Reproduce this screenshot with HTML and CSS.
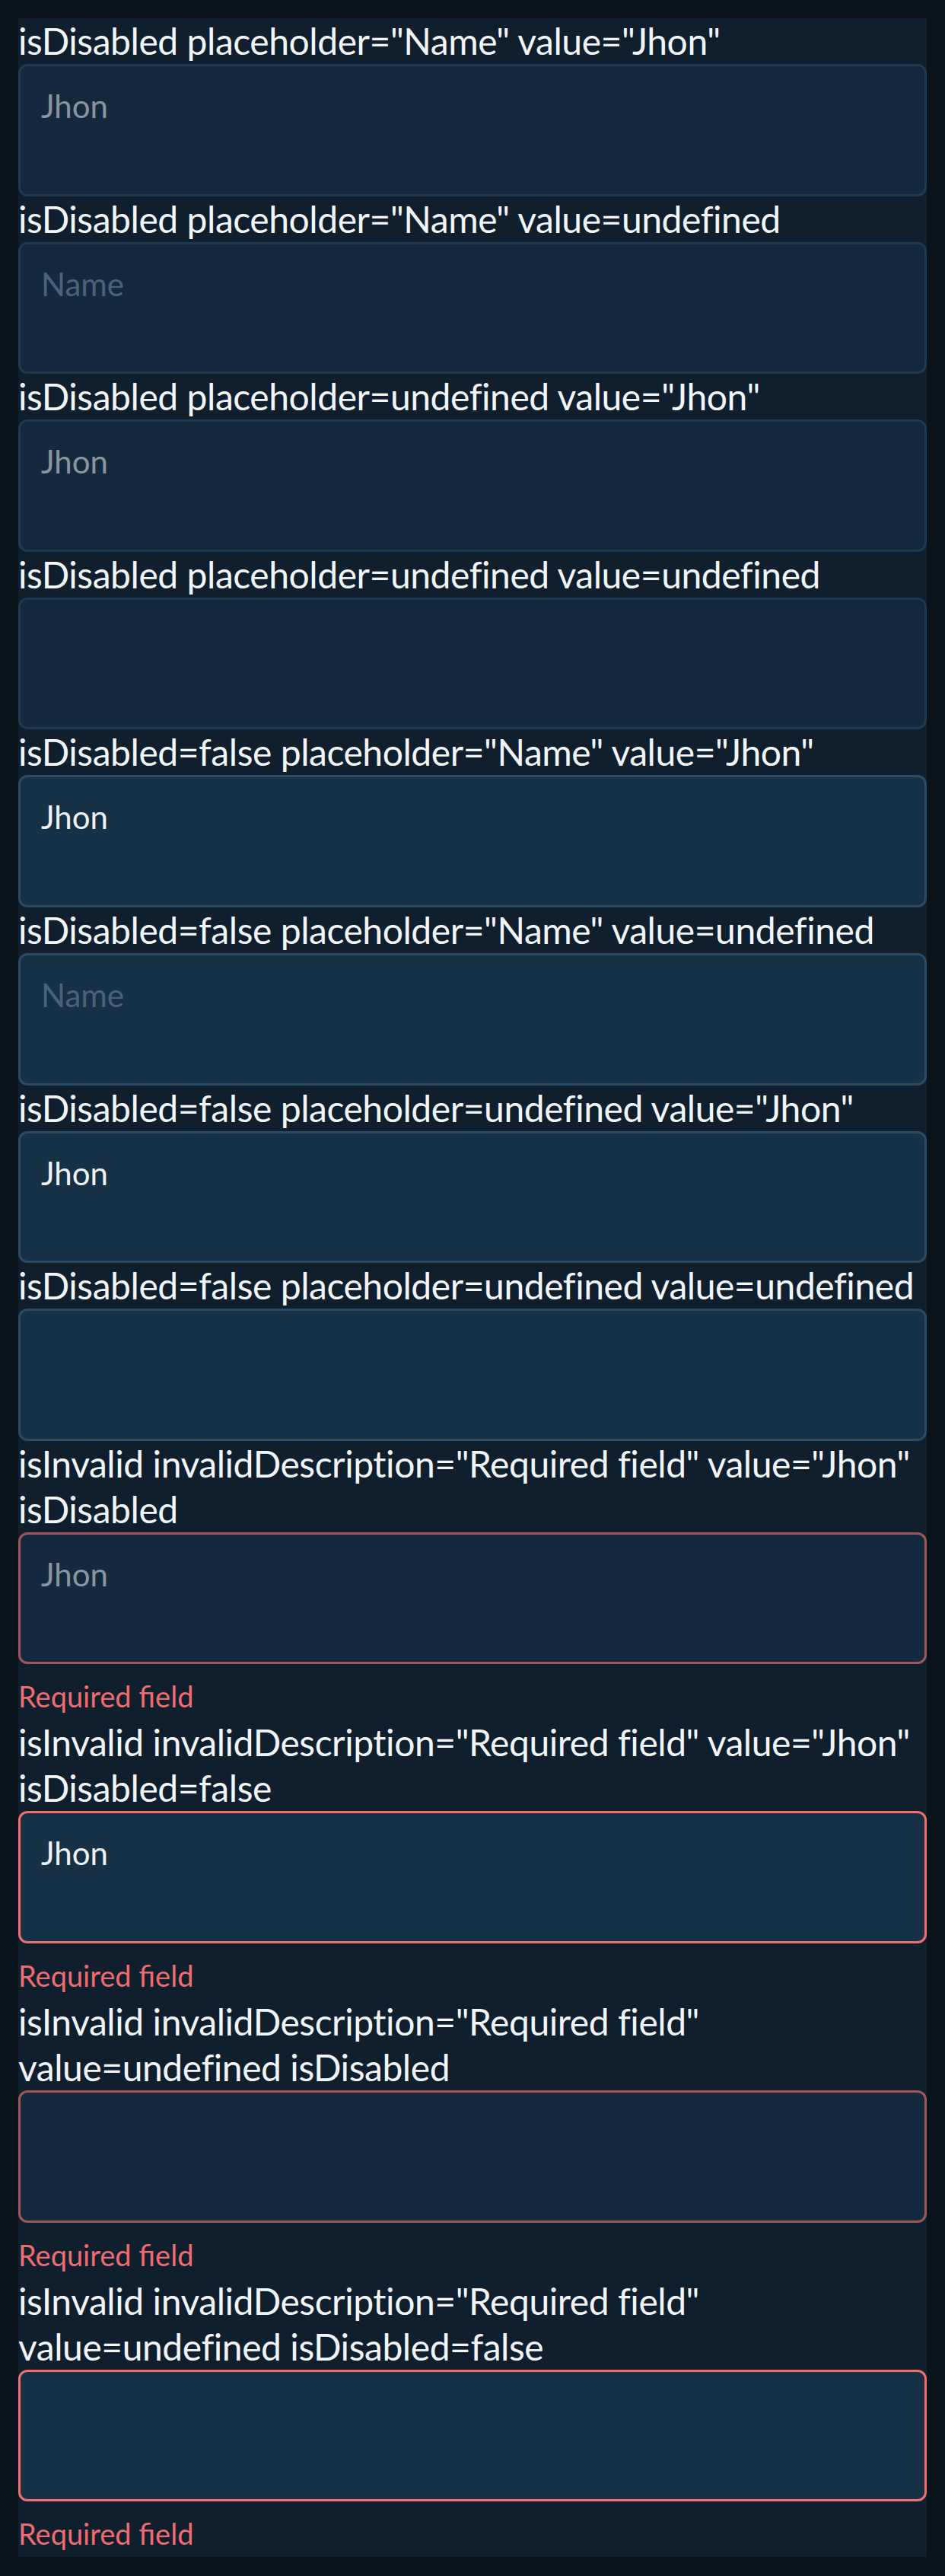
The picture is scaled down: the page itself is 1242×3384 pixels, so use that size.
FILE: index.html
```html
<!DOCTYPE html>
<html lang="en">
<head>
<meta charset="utf-8">
<title>TextArea states</title>
<link rel="stylesheet" href="styles.css">
</head>
<body>
<main class="panel">
  <section class="story">
    <div class="label">isDisabled placeholder="Name" value="Jhon"</div>
    <div class="field is-disabled"><span class="value">Jhon</span></div>
  </section>
  <section class="story">
    <div class="label">isDisabled placeholder="Name" value=undefined</div>
    <div class="field is-disabled"><span class="placeholder">Name</span></div>
  </section>
  <section class="story">
    <div class="label">isDisabled placeholder=undefined value="Jhon"</div>
    <div class="field is-disabled"><span class="value">Jhon</span></div>
  </section>
  <section class="story">
    <div class="label">isDisabled placeholder=undefined value=undefined</div>
    <div class="field is-disabled"></div>
  </section>
  <section class="story">
    <div class="label">isDisabled=false placeholder="Name" value="Jhon"</div>
    <div class="field"><span class="value">Jhon</span></div>
  </section>
  <section class="story">
    <div class="label">isDisabled=false placeholder="Name" value=undefined</div>
    <div class="field"><span class="placeholder">Name</span></div>
  </section>
  <section class="story">
    <div class="label">isDisabled=false placeholder=undefined value="Jhon"</div>
    <div class="field"><span class="value">Jhon</span></div>
  </section>
  <section class="story">
    <div class="label">isDisabled=false placeholder=undefined value=undefined</div>
    <div class="field"></div>
  </section>
  <section class="story">
    <div class="label"><span class="line">isInvalid invalidDescription="Required field" value="Jhon"</span><span class="line">isDisabled</span></div>
    <div class="field is-disabled is-invalid"><span class="value">Jhon</span></div>
    <div class="error">Required field</div>
  </section>
  <section class="story">
    <div class="label"><span class="line">isInvalid invalidDescription="Required field" value="Jhon"</span><span class="line">isDisabled=false</span></div>
    <div class="field is-invalid"><span class="value">Jhon</span></div>
    <div class="error">Required field</div>
  </section>
  <section class="story">
    <div class="label"><span class="line">isInvalid invalidDescription="Required field"</span><span class="line">value=undefined isDisabled</span></div>
    <div class="field is-disabled is-invalid"></div>
    <div class="error">Required field</div>
  </section>
  <section class="story">
    <div class="label"><span class="line">isInvalid invalidDescription="Required field"</span><span class="line">value=undefined isDisabled=false</span></div>
    <div class="field is-invalid"></div>
    <div class="error">Required field</div>
  </section>
</main>
</body>
</html>
```
FILE: styles.css
```css
* { box-sizing: border-box; }

html, body {
  margin: 0;
  background: #08131b;
}

body {
  padding: 24px;
  font-family: "Lato", "Noto Sans", sans-serif;
}

.panel {
  display: flex;
  flex-direction: column;
  background: #0f1f2e;
}

.story {
  display: flex;
  flex-direction: column;
}

.label {
  font-size: 48px;
  line-height: 60px;
  letter-spacing: -0.45px;
  color: #f2f5f8;
  white-space: nowrap;
}

.label .line {
  display: block;
}

.field {
  height: 173.6px;
  padding: 21px 24px 0 27px;
  border: 3px solid #2a4a66;
  border-radius: 12px;
  background: #163045;
  font-size: 42px;
  line-height: 63px;
  color: #eef2f5;
}

.field.is-disabled {
  background: #14293e;
  border-color: #1e3952;
}

.field.is-invalid {
  border-color: #f26d70;
}

.field.is-disabled.is-invalid {
  border-color: #a1555d;
}

.field.is-disabled .value {
  color: #8a959e;
}

.placeholder {
  color: #4b6379;
}

.error {
  height: 73px;
  padding-top: 18px;
  font-size: 38px;
  line-height: 49px;
  color: #f06b6e;
}
```
